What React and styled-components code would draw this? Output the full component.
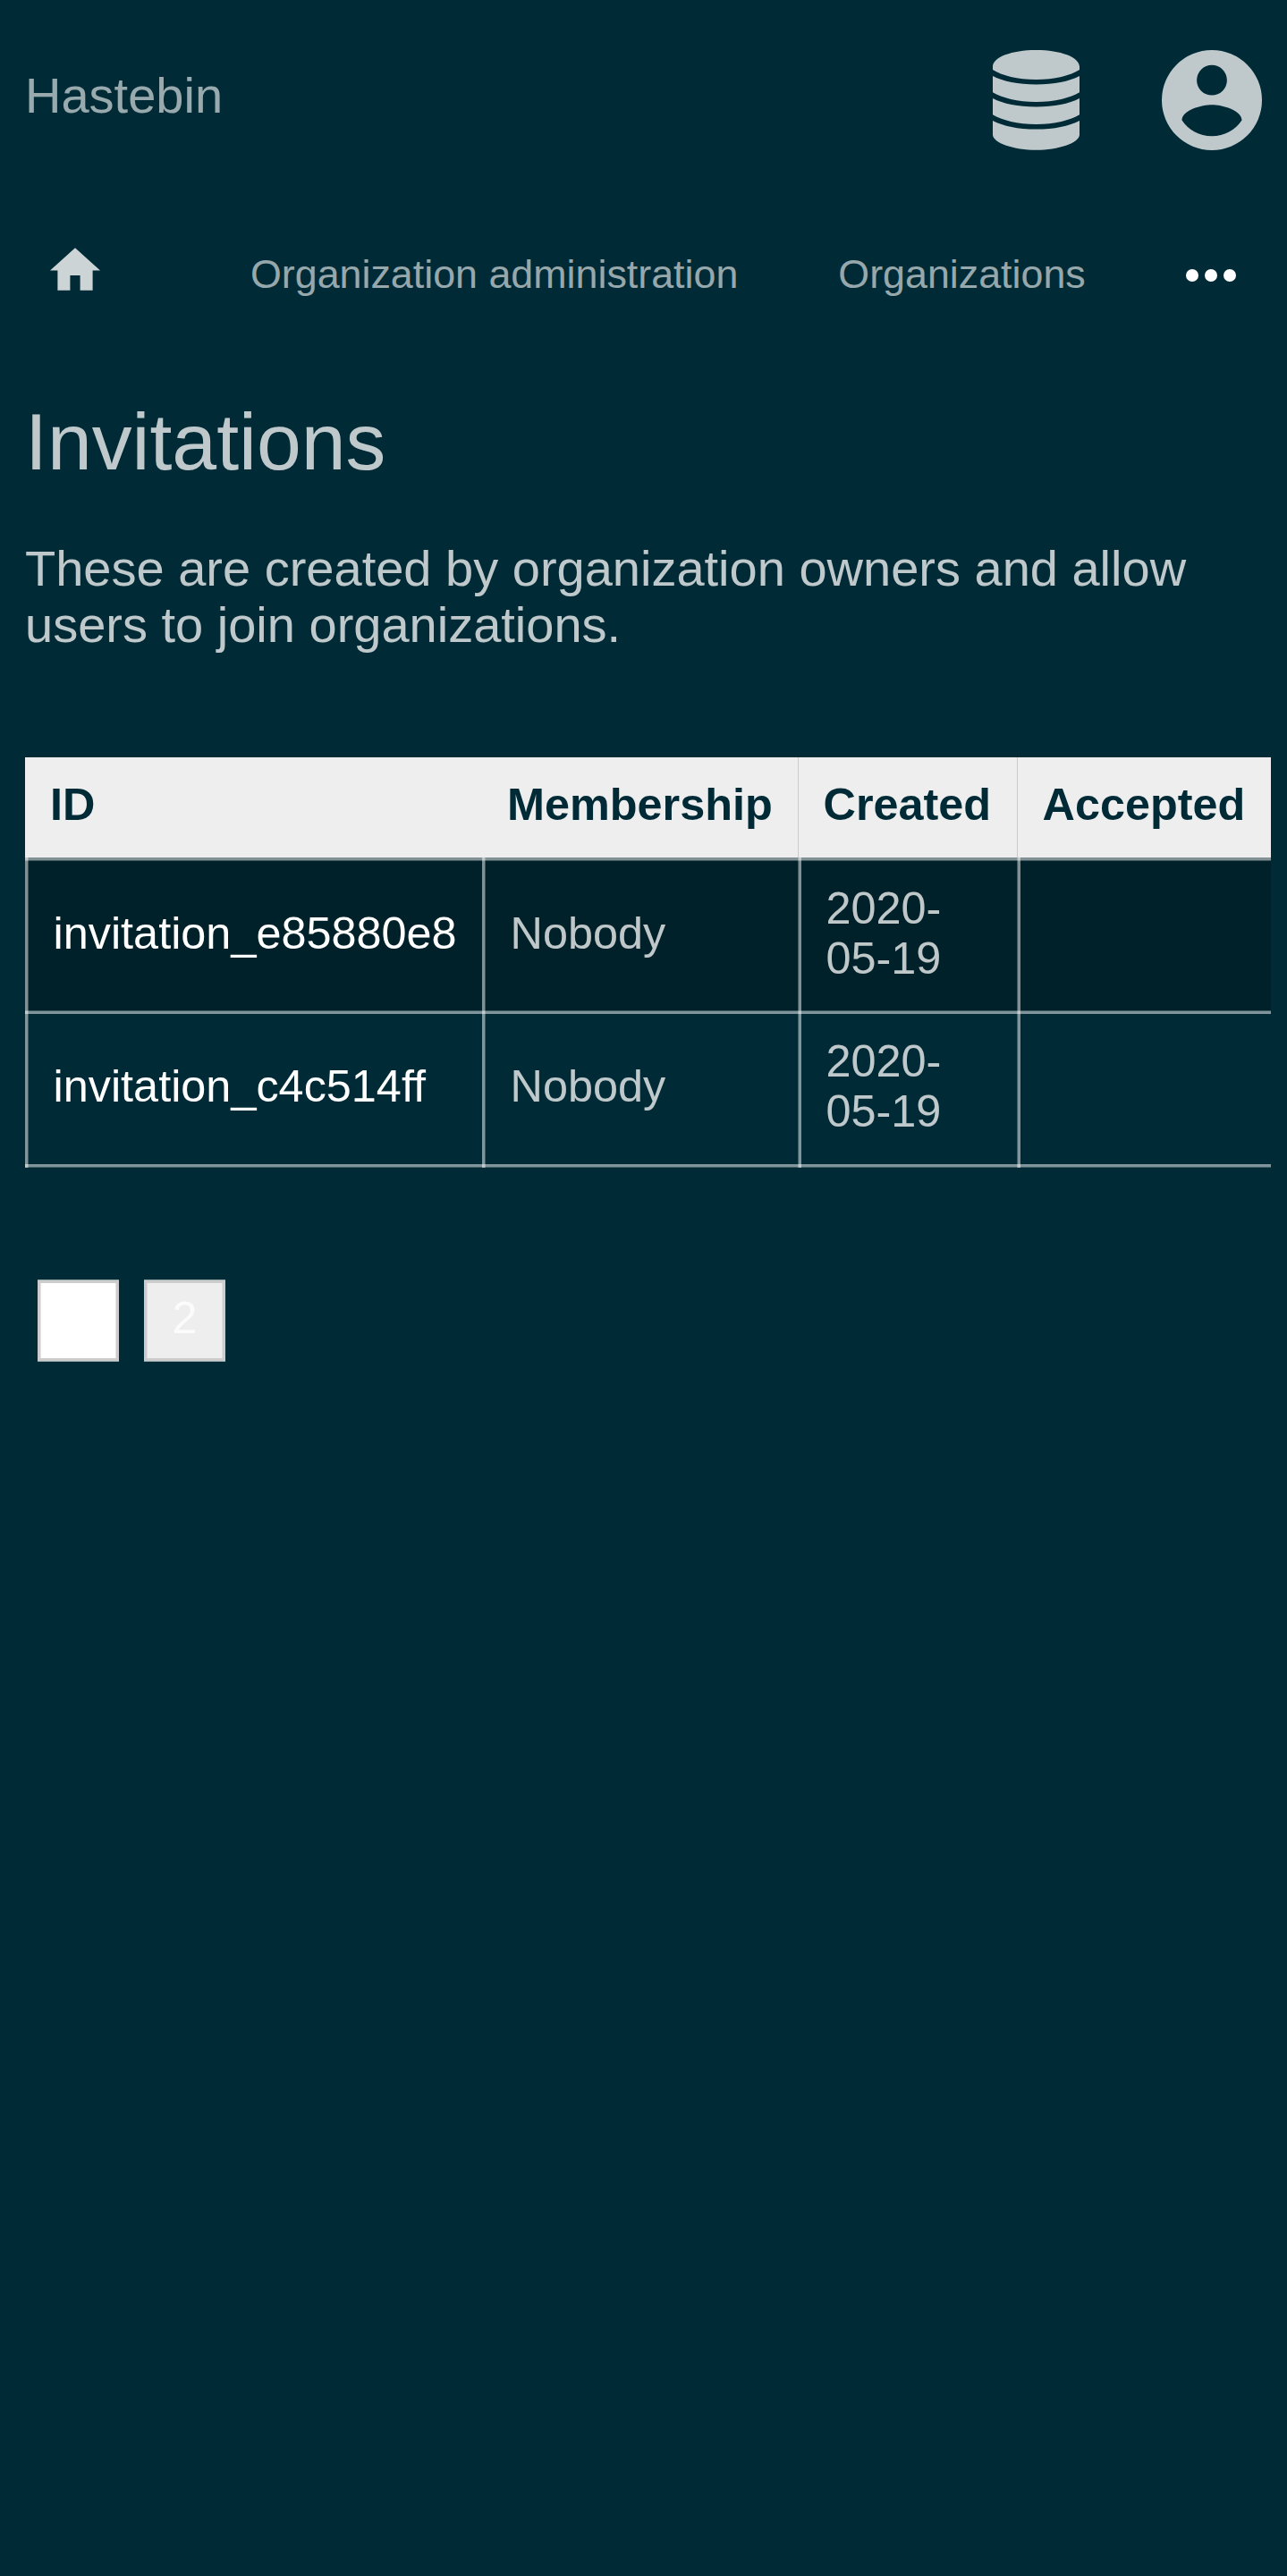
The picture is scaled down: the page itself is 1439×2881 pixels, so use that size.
import React from "react";
import styled, { createGlobalStyle, css } from "styled-components";

const Global = createGlobalStyle`
  html, body { margin: 0; background: #002b36; }
  body {
    font-family: "Liberation Sans", Arial, sans-serif;
    font-size: 56px;
    line-height: 63px;
    color: rgba(255, 255, 255, 0.75);
  }
`;
const Page = styled.div`
  min-height: 2881px;
  box-sizing: border-box;
`;
const Header = styled.header`
  display: flex;
  align-items: center;
  justify-content: space-between;
  padding: 56px 28.4px 0 28px;
  height: 112px;
`;
const Brand = styled.a`
  color: rgba(255, 255, 255, 0.6);
  margin-top: -11px;
`;
const Actions = styled.div`
  display: flex;
  gap: 67.6px;
`;
const Icon = styled.svg`
  display: block;
  width: ${(p) => p.$w}px;
  height: ${(p) => p.$h}px;
  fill: currentColor;
`;
const Nav = styled.nav`
  display: flex;
  align-items: center;
  height: 56px;
  padding: 110px 56px 0;
  font-size: 44.8px;
  line-height: 52px;
`;
const Home = styled.a`
  display: flex;
  color: rgba(255, 255, 255, 0.8);
  margin: -10px 168px 0 0;
`;
const NavLink = styled.a`
  color: rgba(255, 255, 255, 0.6);
  margin-right: 112px;
  white-space: nowrap;
`;
const More = styled.a`
  display: flex;
  margin: 4px 0 0 0.5px;
  color: #fff;
`;
const Main = styled.main`
  padding: 108px 28px 0;
`;
const Title = styled.h1`
  margin: 0;
  font-size: 89.6px;
  line-height: 104px;
  font-weight: 400;
`;
const Intro = styled.p`
  margin: 58px 0 117px;
`;
const Table = styled.table`
  border-collapse: separate;
  border-spacing: 0;
  table-layout: fixed;
  width: 1393px;
  font-size: 50.4px;
  line-height: 56px;
`;
const Th = styled.th`
  box-sizing: border-box;
  height: 112px;
  width: ${(p) => p.$w}px;
  padding: 24px 0 0 ${(p) => (p.$line ? 28.5 : 28)}px;
  vertical-align: top;
  line-height: 57px;
  text-align: left;
  color: #002b36;
  background: #eee;
  box-shadow: ${(p) => (p.$line ? "inset 1px 0 #cbcbcb" : "none")};
`;
const Row = styled.tr`
  background: ${(p) => (p.$dark ? "#002129" : "transparent")};
`;

/* A 3.5px rule: a half-strength pixel either after or before three full ones. */
const rule = (dir, softFirst) =>
  softFirst
    ? `linear-gradient(${dir}, rgba(255,255,255,.25) 0 1px, rgba(255,255,255,.5) 1px 4px, transparent 4px)`
    : `linear-gradient(${dir}, rgba(255,255,255,.5) 0 3px, rgba(255,255,255,.25) 3px 4px, transparent 4px)`;

const Td = styled.td`
  box-sizing: border-box;
  height: ${(p) => (p.$last ? 176 : 171)}px;
  padding: 0 28px ${(p) => (p.$last ? 6 : 1)}px 31.5px;
  color: ${(p) => (p.$link ? "#fff" : "inherit")};
  ${(p) => css`
    background-image: ${rule("to right", p.$col > 1)},
      ${rule("to bottom", p.$last)}
      ${p.$last ? `, ${rule("to top", true)}` : ""};
  `}
`;
const Pager = styled.div`
  display: flex;
  gap: 28px;
  padding: 126px 14px 0;
`;
const PageButton = styled.a`
  box-sizing: border-box;
  width: 91px;
  height: 90px;
  border: 3px solid #ccc;
  background: ${(p) => (p.$current ? "#fff" : "#eee")};
  color: ${(p) => (p.$current ? "#fff" : "rgba(255, 255, 255, 0.75)")};
  box-shadow: 0 -1px #99aaac, 0 1px #99aaac,
    inset 1px 0 ${(p) => (p.$current ? "#e5e5e5" : "#ddd")},
    inset -1px 0 ${(p) => (p.$current ? "#e5e5e5" : "#ddd")};
  font-size: 50.4px;
  line-height: 77px;
  text-align: center;
`;

const rows = [
  ["invitation_e85880e8", "Nobody", "2020-05-19", ""],
  ["invitation_c4c514ff", "Nobody", "2020-05-19", ""],
];

export default function App() {
  return (
    <Page>
      <Global />
      <Header>
        <Brand>Hastebin</Brand>
        <Actions>
          <Icon $w={146} $h={112} viewBox="0 0 146 112">
            <path d="M25 18.500C25 8 46 0 73.500 0S122 8 122 18.500V22C112 28.500 94 33 73.500 33S35 28.500 25 22ZM25 29C37 35 53 38.500 73.500 38.500S110 35 122 29V47.300C112 53.500 94 58 73.500 58S35 53.500 25 47.300ZM25 54C37 60 53 63.500 73.500 63.500S110 60 122 54V72.300C112 78.500 94 83 73.500 83S35 78.500 25 72.300ZM25 79C37 85 53 88.600 73.500 88.600S110 85 122 79V94.500C122 104 98 111.800 73.500 111.800S25 104 25 94.500Z" />
          </Icon>
          <Icon $w={112} $h={112} viewBox="0 0 112 112">
            <path
              fillRule="evenodd"
              d="M56 0A56 56 0 1 1 56 112A56 56 0 1 1 56 0ZM56 16.800A16.900 16.900 0 1 0 56 50.600A16.900 16.900 0 1 0 56 16.800ZM56 61.200C44.800 61.200 22.500 67 22.500 78.500C30 89.500 42 96.300 56 96.300S82 89.500 89.500 78.500C89.500 67 67 61.200 56 61.200Z"
            />
          </Icon>
        </Actions>
      </Header>
      <Nav>
        <Home>
          <Icon $w={56} $h={48} viewBox="2 3 20 17">
            <path d="M10 20v-6h4v6h5v-8h3L12 3 2 12h3v8z" />
          </Icon>
        </Home>
        <NavLink>Organization administration</NavLink>
        <NavLink>Organizations</NavLink>
        <More>
          <Icon $w={56} $h={14} viewBox="0 0 56 14">
            <circle cx="7" cy="7" r="7" />
            <circle cx="28" cy="7" r="7" />
            <circle cx="49" cy="7" r="7" />
          </Icon>
        </More>
      </Nav>
      <Main>
        <Title>Invitations</Title>
        <Intro>
          These are created by organization owners and allow users to join
          organizations.
        </Intro>
        <Table>
          <thead>
            <tr>
              <Th $w={511}>ID</Th>
              <Th $w={353}>Membership</Th>
              <Th $w={245} $line>Created</Th>
              <Th $w={284} $line>Accepted</Th>
            </tr>
          </thead>
          <tbody>
            {rows.map((cells, r) => (
              <Row key={cells[0]} $dark={r === 0}>
                {cells.map((text, c) => (
                  <Td
                    key={c}
                    $col={c}
                    $link={c === 0}
                    $last={r === rows.length - 1}
                  >
                    {text}
                  </Td>
                ))}
              </Row>
            ))}
          </tbody>
        </Table>
        <Pager>
          <PageButton $current>1</PageButton>
          <PageButton>2</PageButton>
        </Pager>
      </Main>
    </Page>
  );
}
